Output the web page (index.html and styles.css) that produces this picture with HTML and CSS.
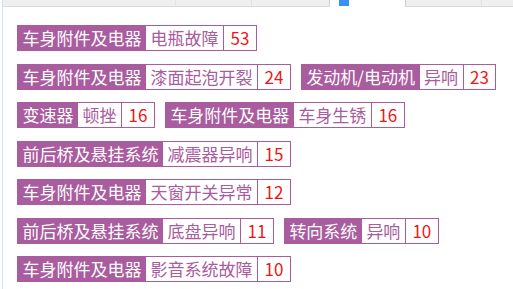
FILE: index.html
```html
<!DOCTYPE html>
<html lang="zh-CN">
<head>
<meta charset="utf-8">
<title>故障标签</title>
<link rel="stylesheet" href="styles.css">
</head>
<body>
<div class="panel">
  <div class="tabs">
    <div class="tab tab-a"></div>
    <div class="tab tab-b"></div>
    <div class="tab tab-c"></div>
    <div class="tab tab-active"><span class="tab-mark"></span></div>
    <div class="tab tab-d"></div>
    <div class="tab tab-e"></div>
  </div>
  <div class="tags">
    <div class="tag"><span class="tag-label">车身附件及电器</span><span class="tag-value">电瓶故障</span><span class="tag-count">53</span></div>
    <div class="tag"><span class="tag-label">车身附件及电器</span><span class="tag-value">漆面起泡开裂</span><span class="tag-count">24</span></div>
    <div class="tag"><span class="tag-label">发动机/电动机</span><span class="tag-value">异响</span><span class="tag-count">23</span></div>
    <div class="tag"><span class="tag-label">变速器</span><span class="tag-value">顿挫</span><span class="tag-count">16</span></div>
    <div class="tag"><span class="tag-label">车身附件及电器</span><span class="tag-value">车身生锈</span><span class="tag-count">16</span></div>
    <div class="tag"><span class="tag-label">前后桥及悬挂系统</span><span class="tag-value">减震器异响</span><span class="tag-count">15</span></div>
    <div class="tag"><span class="tag-label">车身附件及电器</span><span class="tag-value">天窗开关异常</span><span class="tag-count">12</span></div>
    <div class="tag"><span class="tag-label">前后桥及悬挂系统</span><span class="tag-value">底盘异响</span><span class="tag-count">11</span></div>
    <div class="tag"><span class="tag-label">转向系统</span><span class="tag-value">异响</span><span class="tag-count">10</span></div>
    <div class="tag"><span class="tag-label">车身附件及电器</span><span class="tag-value">影音系统故障</span><span class="tag-count">10</span></div>
  </div>
</div>
</body>
</html>
```

FILE: styles.css
```css
html, body {
  margin: 0;
  padding: 0;
  background: #ffffff;
}

body {
  font-family: "Noto Sans CJK SC", "Noto Sans", sans-serif;
}

.panel {
  margin-left: 2px;
  border-left: 1px solid #cfe4fa;
  min-height: 100vh;
  box-sizing: border-box;
}

.tabs {
  display: flex;
  height: 7px;
}

.tab {
  box-sizing: border-box;
  height: 7px;
  background: #efefef;
  border-bottom: 1px solid #d9d9d9;
}

.tab-a {
  width: 173px;
  border-right: 1px solid #e2e2e2;
}

.tab-b {
  width: 76px;
  border-right: 1px solid #e2e2e2;
}

.tab-c {
  width: 78px;
  border-right: 1px solid #cfcfcf;
}

.tab-active {
  width: 75px;
  background: #ffffff;
  border-bottom: none;
  padding-left: 9px;
}

.tab-mark {
  display: block;
  width: 10px;
  height: 6px;
  background: #3a8ff3;
}

.tab-d {
  width: 77px;
  border-left: 1px solid #cfcfcf;
  border-right: 1px solid #e2e2e2;
}

.tab-e {
  flex: 1;
}

.tags {
  display: flex;
  flex-wrap: wrap;
  row-gap: 12.5px;
  column-gap: 10px;
  padding: 18px 0 0 14px;
}

.tag {
  display: flex;
  border: 1px solid #a95c9e;
  height: 26px;
  box-sizing: border-box;
  font-size: 17px;
  line-height: 24px;
  white-space: nowrap;
}

.tag-label {
  background: #a95c9e;
  color: #ffffff;
  padding: 0 4.5px;
}

.tag-value {
  color: #a95c9e;
  padding: 0 4.5px;
}

.tag-count {
  color: #ee1515;
  border-left: 1px solid #a95c9e;
  padding: 0 6.5px;
}
```
